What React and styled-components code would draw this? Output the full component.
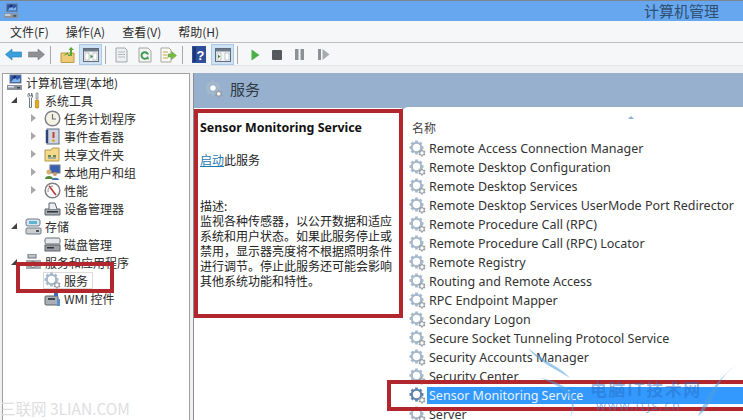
import React from "react";
import styled, { createGlobalStyle } from "styled-components";

const FONT = `"Noto Sans", "Noto Sans CJK SC", sans-serif`;
const CJK = `"Noto Sans CJK SC", "Noto Sans", sans-serif`;

const Global = createGlobalStyle`
  html, body { margin: 0; padding: 0; background: #fff; }
`;

const Page = styled.div`
  position: relative;
  width: 743px;
  height: 420px;
  overflow: hidden;
  display: flex;
  flex-direction: column;
  background: #f0f1f3;
  font-family: ${CJK};
  color: #2b2b2b;
`;

const TitleBar = styled.div`
  height: 20px;
  flex: none;
  display: flex;
  align-items: center;
  justify-content: space-between;
  padding: 0 24px 0 3px;
  background: #66a7f0;
  border-top: 1px solid #7d8590;
`;
const TitleText = styled.span`
  font-size: 15px;
  line-height: 18px;
  color: #2f4f6f;
`;

const MenuBar = styled.div`
  height: 22px;
  flex: none;
  display: flex;
  align-items: center;
  gap: 17px;
  padding-left: 10px;
  background: #f6f7f9;
  border-bottom: 1px solid #bdbfc3;
  box-sizing: border-box;
  font-size: 12px;
`;

const ToolBar = styled.div`
  height: 23px;
  flex: none;
  display: flex;
  align-items: center;
  padding: 1px 0 0 5px;
  box-sizing: border-box;
  background: #f6f7f9;
  border-bottom: 1px solid #e4e5e7;
`;
const ToolSlot = styled.div`
  flex: none;
  width: ${(p) => p.$w}px;
  height: 21px;
  margin-left: ${(p) => p.$gap || 0}px;
  display: flex;
  align-items: center;
  justify-content: center;
  box-sizing: border-box;
  ${(p) => p.$active && "background:#cfe2f5;border:1px solid #a9c9e8;"}
`;
const ToolSep = styled.div`
  flex: none;
  width: 1px;
  height: 18px;
  margin-left: ${(p) => p.$gap || 0}px;
  background: #a6a8ac;
`;

const Body = styled.div`
  flex: 1;
  min-height: 0;
  display: flex;
  padding: 7px 0 0 2px;
  gap: 3px;
`;

const TreePanel = styled.div`
  width: 188px;
  flex: none;
  background: #fff;
  border: 1px solid #a0a0a0;
  border-bottom: none;
  box-sizing: border-box;
`;
const TreeRow = styled.div`
  height: 18px;
  box-sizing: border-box;
  display: flex;
  align-items: center;
  padding: 0 0 2px ${(p) => p.$indent}px;
  font-size: 12px;
  white-space: nowrap;
  color: #2b2b2b;
`;
const Arrow = styled.span`
  width: 0;
  height: 0;
  flex: none;
  margin-right: ${(p) => p.$mr}px;
  ${(p) =>
    p.$open
      ? `border-left:6px solid transparent;border-bottom:6px solid #404040;`
      : `border-top:4px solid transparent;border-bottom:4px solid transparent;border-left:5px solid #a8a8a8;`}
`;
const IconBox = styled.span`
  width: 17px;
  height: 17px;
  flex: none;
  margin-right: 3px;
  display: flex;
  align-items: center;
  justify-content: center;
`;
const SelectedItem = styled.span`
  display: flex;
  align-items: center;
  height: 15px;
  margin-left: -1px;
  padding-right: 4px;
  border: 1px solid #dcdcdc;
`;

const Content = styled.div`
  flex: 1;
  min-width: 0;
  display: flex;
  flex-direction: column;
  border-left: 1px solid #8b8f94;
  background: #96b0ce;
`;
const ContentHeader = styled.div`
  height: 35px;
  flex: none;
  display: flex;
  align-items: center;
  box-sizing: border-box;
  gap: 7px;
  padding: 0 0 4px 11px;
  font-size: 15px;
  color: #2f3a45;
`;
const Split = styled.div`
  flex: 1;
  min-height: 0;
  display: flex;
`;
const Description = styled.div`
  width: 208px;
  flex: none;
  box-sizing: border-box;
  background: #fff;
  padding: 12px 0 0 6px;
  font-size: 12px;
  line-height: 15px;
  color: #222;
`;
const ServiceTitle = styled.div`
  font-family: ${FONT};
  font-weight: 700;
  font-size: 12.4px;
  line-height: 16px;
  color: #111;
`;
const StartLine = styled.div`
  margin-top: 16px;
`;
const StartLink = styled.span`
  color: #1f78b4;
  text-decoration: underline;
`;
const DescBlock = styled.div`
  margin-top: 31px;
  white-space: nowrap;
`;

const ListPanel = styled.div`
  flex: 1;
  min-width: 0;
  background: #fff;
  border-top-left-radius: 6px;
  margin-top: -1px;
  overflow: hidden;
  display: flex;
  flex-direction: column;
`;
const ListHeader = styled.div`
  position: relative;
  height: 32px;
  flex: none;
  display: flex;
  align-items: flex-end;
  padding: 0 0 3px 10px;
  box-sizing: border-box;
  font-size: 12px;
  color: #444;
`;
const SortCaret = styled.span`
  position: absolute;
  left: 226px;
  top: 9px;
  width: 0;
  height: 0;
  border-left: 3px solid transparent;
  border-right: 3px solid transparent;
  border-bottom: 3px solid #8fb2d2;
`;
const ServiceRow = styled.div`
  height: 19px;
  flex: none;
  display: flex;
  align-items: center;
  padding-left: 7px;
  font-family: ${FONT};
  font-size: 12.5px;
  white-space: nowrap;
  color: #333;
`;
const RowName = styled.span`
  flex: 1;
  align-self: stretch;
  display: flex;
  align-items: center;
  padding-left: 2px;
  margin-left: 1px;
  ${(p) => p.$selected && "background:#3399ff;color:#e8f4ff;height:17px;align-self:center;"}
`;
const GearWrap = styled.span`
  width: 17px;
  height: 17px;
  flex: none;
  display: flex;
`;

const RedBox = styled.div`
  position: absolute;
  left: ${(p) => p.$x}px;
  top: ${(p) => p.$y}px;
  width: ${(p) => p.$w}px;
  height: ${(p) => p.$h}px;
  box-sizing: border-box;
  border: 4px solid #b2262d;
  pointer-events: none;
`;
const WatermarkLeft = styled.div`
  position: absolute;
  left: 0;
  top: 398px;
  font-family: ${CJK};
  font-size: 15.5px;
  line-height: 20px;
  color: #dedede;
  white-space: nowrap;
`;
const Swoosh = styled.svg`
  position: absolute;
  left: 520px;
  top: 340px;
`;
const WatermarkBig = styled.div`
  position: absolute;
  left: 590px;
  top: 379px;
  font-size: 17px;
  line-height: 20px;
  font-weight: 700;
  letter-spacing: 1.5px;
  color: rgba(35, 105, 190, 0.45);
  white-space: nowrap;
`;
const WatermarkUrl = styled.div`
  position: absolute;
  left: 596px;
  top: 397px;
  font-family: ${FONT};
  font-size: 13px;
  line-height: 16px;
  letter-spacing: 1.5px;
  color: rgba(50, 120, 200, 0.5);
  white-space: nowrap;
`;

/* ---------- icons ---------- */
const Gear = ({ size = 17, dark }) => {
  const teeth = [0, 45, 90, 135, 180, 225, 270, 315];
  const c = dark ? "#5d83ad" : "#a6b9cb";
  return (
    <svg width={size} height={size} viewBox="0 0 17 17">
      <g transform="translate(7.5 7.5)">
        {teeth.map((a) => (
          <rect key={a} x="-1.4" y="-7" width="2.8" height="3" fill={c} transform={`rotate(${a})`} />
        ))}
        <circle r="4.7" fill="none" stroke={c} strokeWidth="2" />
        <circle r="2.6" fill="#fff" />
      </g>
      <g transform="translate(13 13)">
        {[0, 60, 120, 180, 240, 300].map((a) => (
          <rect key={a} x="-.8" y="-3.6" width="1.6" height="1.6" fill="#9a9fa6" transform={`rotate(${a})`} />
        ))}
        <circle r="2.2" fill="#fff" stroke="#9a9fa6" strokeWidth="1.1" />
      </g>
    </svg>
  );
};

const Computer = ({ size = 17 }) => (
  <svg width={size} height={size} viewBox="0 0 17 17">
    <rect x="4" y="1" width="11" height="8" fill="#2f55a8" stroke="#6b7f99" />
    <path d="M5 8 9 3l2 3 3-2v4z" fill="#7fb4ea" />
    <path d="M7 3c1-2 3-2 3 0s-3 3-3 0z" fill="#1c2f70" />
    <rect x="1" y="11" width="15" height="5" fill="#8b929b" />
    <rect x="2" y="12" width="6" height="1.5" fill="#dfe3e8" />
    <rect x="11" y="13" width="3" height="1.5" fill="#3d434a" />
  </svg>
);
const Tools = () => (
  <svg width="17" height="17" viewBox="0 0 17 17">
    <path d="M4 1C2 3 3 5 4.5 6v9.500h2V6C8 5 8 3 6.500 1v3h-2z" fill="#fff" stroke="#6f7780" />
    <path d="M11 1h2v6h-2z" fill="#d6d9dc" stroke="#7d848c" strokeWidth=".7" />
    <rect x="10.300" y="8" width="3.400" height="8" rx="1" fill="#e3ad1c" stroke="#9b7410" strokeWidth=".6" />
  </svg>
);
const Clock = () => (
  <svg width="17" height="17" viewBox="0 0 17 17">
    <circle cx="8.500" cy="8.500" r="7.300" fill="#f5f3e6" stroke="#7f8389" strokeWidth="1.500" />
    <path d="M8.500 4v5H12" fill="none" stroke="#6d6f73" strokeWidth="1.200" />
  </svg>
);
const LogBook = () => (
  <svg width="17" height="17" viewBox="0 0 17 17">
    <rect x="3" y="1" width="12" height="15" fill="#cfd6e2" stroke="#5f6c85" />
    <path d="M3 2v13" stroke="#2f4478" strokeWidth="2.500" />
    <path d="M9.500 4v6" stroke="#c2452e" strokeWidth="2" />
    <circle cx="9.500" cy="12.500" r="1.500" fill="#e3a92a" />
  </svg>
);
const Folder = () => (
  <svg width="17" height="17" viewBox="0 0 17 17">
    <path d="M1 4h6l1.500-2H15v13H1z" fill="#f3d98a" stroke="#b5984c" />
    <path d="M4 9h3v2H4zm5 0h3v2H9z" fill="#5f8a58" />
    <path d="M4 12h8" stroke="#5d7ea3" />
  </svg>
);
const Users = () => (
  <svg width="17" height="17" viewBox="0 0 17 17">
    <rect x="6" y="1" width="10" height="8" fill="#3a5fb0" stroke="#66788f" />
    <circle cx="5" cy="8" r="2.500" fill="#d7ae6f" />
    <path d="M1 15c0-4 8-4 8 0z" fill="#4f8a3c" />
    <circle cx="11" cy="10" r="2" fill="#c99a60" />
    <path d="M8 16c0-3 7-3 7 0z" fill="#4370b8" />
  </svg>
);
const Perf = () => (
  <svg width="17" height="17" viewBox="0 0 17 17">
    <circle cx="8.500" cy="8.500" r="7.300" fill="#fff" stroke="#7e7f80" strokeWidth="1.500" />
    <path d="m5 4 7 9" stroke="#b8352a" strokeWidth="1.500" />
    <path d="M4 10a5 5 0 0 1 5-6" fill="none" stroke="#8a8a8a" />
  </svg>
);
const Device = () => (
  <svg width="17" height="17" viewBox="0 0 17 17">
    <path d="M1 9h15v6H1z" fill="#a5acb4" stroke="#5d646c" />
    <path d="M5 9V3h6l2 6" fill="#e9edf1" stroke="#5d646c" />
    <rect x="3" y="11" width="11" height="1.500" fill="#2d3339" />
  </svg>
);
const Storage = () => (
  <svg width="17" height="17" viewBox="0 0 17 17">
    <rect x="1" y="1" width="14" height="7" rx="2" fill="#d7e4ee" stroke="#6e7a85" />
    <rect x="4" y="3" width="8" height="3" fill="#5fb4d6" />
    <rect x="1" y="10" width="15" height="6" rx="1" fill="#c9ced3" stroke="#6e7a85" />
    <rect x="11" y="12" width="3" height="2" fill="#555" />
  </svg>
);
const Disk = () => (
  <svg width="17" height="17" viewBox="0 0 17 17">
    <rect x="1" y="2" width="15" height="6" rx="1.500" fill="#e5e8ea" stroke="#666c72" />
    <rect x="1" y="9" width="15" height="6" fill="#9aa0a6" stroke="#5f656b" />
    <rect x="3" y="11" width="7" height="1.500" fill="#333" />
  </svg>
);
const ServicesApp = () => (
  <svg width="17" height="17" viewBox="0 0 17 17">
    <rect x="3" y="0" width="8" height="4" fill="#bfc4c9" stroke="#6b7178" />
    <rect x="1" y="6" width="15" height="9" fill="#a5abb2" />
    <circle cx="8" cy="10.500" r="3" fill="#fff" stroke="#6b7178" />
  </svg>
);
const Wmi = () => (
  <svg width="17" height="17" viewBox="0 0 17 17">
    <rect x="1" y="6" width="13" height="9" rx="1" fill="#a8afb6" stroke="#5b6269" />
    <rect x="4" y="8" width="7" height="2" fill="#3f454c" />
    <path d="M10 1h4v5h-4z" fill="#3c6fb5" />
    <path d="M13 9h3v7h-3z" fill="#5d8fc9" />
  </svg>
);

const Back = () => (
  <svg width="17" height="13" viewBox="0 0 17 13">
    <path d="M0.500 6.500 7 1v3h9.500v5H7v3z" fill="#3aa0dc" stroke="#2a7cb0" strokeWidth=".6" />
  </svg>
);
const Forward = () => (
  <svg width="17" height="13" viewBox="0 0 17 13">
    <path d="M16.500 6.500 10 1v3H.5v5H10v3z" fill="#8e9093" stroke="#77797c" strokeWidth=".6" />
  </svg>
);
const UpFolder = () => (
  <svg width="15" height="16" viewBox="0 0 15 16">
    <path d="M1 6h13v9.500H1z" fill="#eecb74" stroke="#b99a49" />
    <path d="M3 9 8 5V7.500h2V3H8.500L11 0l3 3h-2v6H8V7z" fill="#5fa53a" />
  </svg>
);
const PaneIcon = ({ play }) => (
  <svg width="16" height="14" viewBox="0 0 16 14">
    <rect x=".5" y=".5" width="15" height="13" fill="#f4f6f8" stroke="#5f6b76" />
    <rect x="1" y="1" width="14" height="2.500" fill="#6d7a87" />
    <rect x="2" y="5" width="4" height="7" fill="#fff" stroke="#9aa2a9" strokeWidth=".6" />
    <rect x="10" y="5" width="4" height="7" fill="#fff" stroke="#9aa2a9" strokeWidth=".6" />
    {play ? (
      <path d="M3 6.500 5.500 8.500 3 10.500z" fill="#3f8f3f" />
    ) : (
      <path d="M10 8.500 7.500 6.500v4z" fill="#3f8f3f" />
    )}
  </svg>
);
const Doc = () => (
  <svg width="15" height="16" viewBox="0 0 15 16">
    <path d="M2 1h9l2 2v12H2z" fill="#eef0f2" stroke="#a2a6aa" />
    <path d="M4 5h7M4 7.500h7M4 10h7" stroke="#b5b9bd" />
  </svg>
);
const RefreshDoc = () => (
  <svg width="14" height="16" viewBox="0 0 14 16">
    <path d="M1 1h9l3 3v11H1z" fill="#f3f4f2" stroke="#a3a6a3" />
    <path d="M10 7.500A3.300 3.300 0 1 0 9 11" fill="none" stroke="#3f9a54" strokeWidth="2" />
    <path d="M7.500 11.800 11 12.500 10 9z" fill="#3f9a54" />
  </svg>
);
const Export = () => (
  <svg width="17" height="16" viewBox="0 0 17 16">
    <path d="M1 1h8l2 2v12H1z" fill="#fafaf4" stroke="#a8a8a0" />
    <path d="M3 5h5M3 8h4M3 11h5" stroke="#c9a24a" />
    <path d="M8 7h3.500V4.500L16.500 8.500l-5 4V10H8z" fill="#77bb3f" stroke="#5e9a30" strokeWidth=".5" />
  </svg>
);
const Help = () => (
  <svg width="14" height="17" viewBox="0 0 14 17">
    <rect width="14" height="17" fill="#2f4f9a" />
    <rect x="1" y="1" width="3" height="15" fill="#1f3678" />
    <text x="8.500" y="13.500" textAnchor="middle" fontFamily='"Liberation Sans", sans-serif' fontWeight="700" fontSize="13" fill="#fff">?</text>
  </svg>
);
const Play = () => (
  <svg width="9" height="12" viewBox="0 0 9 12"><path d="M0.500 0.500 8.500 6 0.500 11.500z" fill="#4cb04a" /></svg>
);
const Stop = () => (
  <svg width="10" height="10" viewBox="0 0 10 10"><rect width="10" height="10" rx="1" fill="#55585c" /></svg>
);
const Pause = () => (
  <svg width="9" height="11" viewBox="0 0 9 11">
    <rect width="3.500" height="11" fill="#8d9094" /><rect x="5.500" width="3.500" height="11" fill="#8d9094" />
  </svg>
);
const Resume = () => (
  <svg width="12" height="11" viewBox="0 0 12 11">
    <rect width="3" height="11" fill="#8d9094" /><path d="M4.500 0 11.500 5.500 4.500 11z" fill="#a6a9ad" />
  </svg>
);

const tree = [
  { indent: 3, icon: <Computer />, label: "计算机管理(本地)" },
  { indent: 8, arrow: "open", mr: 8, icon: <Tools />, label: "系统工具" },
  { indent: 28, arrow: "closed", mr: 8, icon: <Clock />, label: "任务计划程序" },
  { indent: 28, arrow: "closed", mr: 8, icon: <LogBook />, label: "事件查看器" },
  { indent: 28, arrow: "closed", mr: 8, icon: <Folder />, label: "共享文件夹" },
  { indent: 28, arrow: "closed", mr: 8, icon: <Users />, label: "本地用户和组" },
  { indent: 28, arrow: "closed", mr: 8, icon: <Perf />, label: "性能" },
  { indent: 41, icon: <Device />, label: "设备管理器" },
  { indent: 8, arrow: "open", mr: 8, icon: <Storage />, label: "存储" },
  { indent: 41, icon: <Disk />, label: "磁盘管理" },
  { indent: 8, arrow: "open", mr: 8, icon: <ServicesApp />, label: "服务和应用程序" },
  { indent: 41, icon: <Gear />, label: "服务", selected: true },
  { indent: 41, icon: <Wmi />, label: "WMI 控件" },
];

const services = [
  "Remote Access Connection Manager",
  "Remote Desktop Configuration",
  "Remote Desktop Services",
  "Remote Desktop Services UserMode Port Redirector",
  "Remote Procedure Call (RPC)",
  "Remote Procedure Call (RPC) Locator",
  "Remote Registry",
  "Routing and Remote Access",
  "RPC Endpoint Mapper",
  "Secondary Logon",
  "Secure Socket Tunneling Protocol Service",
  "Security Accounts Manager",
  "Security Center",
  "Sensor Monitoring Service",
  "Server",
];

const descLines = [
  "描述:",
  "监视各种传感器，以公开数据和适应",
  "系统和用户状态。如果此服务停止或",
  "禁用，显示器亮度将不根据照明条件",
  "进行调节。停止此服务还可能会影响",
  "其他系统功能和特性。",
];

export default function App() {
  return (
    <Page>
      <Global />
      <TitleBar>
        <Computer size={16} />
        <TitleText>计算机管理</TitleText>
      </TitleBar>
      <MenuBar>
        <span>文件(F)</span>
        <span>操作(A)</span>
        <span>查看(V)</span>
        <span>帮助(H)</span>
      </MenuBar>
      <ToolBar>
        <ToolSlot $w={17}><Back /></ToolSlot>
        <ToolSlot $w={17} $gap={6}><Forward /></ToolSlot>
        <ToolSep $gap={5} />
        <ToolSlot $w={15} $gap={9}><UpFolder /></ToolSlot>
        <ToolSlot $w={23} $gap={4} $active><PaneIcon /></ToolSlot>
        <ToolSep $gap={3} />
        <ToolSlot $w={15} $gap={8}><Doc /></ToolSlot>
        <ToolSlot $w={14} $gap={9}><RefreshDoc /></ToolSlot>
        <ToolSlot $w={17} $gap={8}><Export /></ToolSlot>
        <ToolSep $gap={5} />
        <ToolSlot $w={14} $gap={9}><Help /></ToolSlot>
        <ToolSlot $w={23} $gap={5} $active><PaneIcon play /></ToolSlot>
        <ToolSep $gap={3} />
        <ToolSlot $w={9} $gap={13}><Play /></ToolSlot>
        <ToolSlot $w={10} $gap={12}><Stop /></ToolSlot>
        <ToolSlot $w={9} $gap={13}><Pause /></ToolSlot>
        <ToolSlot $w={12} $gap={14}><Resume /></ToolSlot>
      </ToolBar>
      <Body>
        <TreePanel>
          {tree.map((n) => (
            <TreeRow key={n.label} $indent={n.indent}>
              {n.arrow && <Arrow $open={n.arrow === "open"} $mr={n.mr} />}
              {n.selected ? (
                <SelectedItem>
                  <IconBox>{n.icon}</IconBox>
                  {n.label}
                </SelectedItem>
              ) : (
                <>
                  <IconBox>{n.icon}</IconBox>
                  {n.label}
                </>
              )}
            </TreeRow>
          ))}
        </TreePanel>
        <Content>
          <ContentHeader>
            <Gear size={18} />
            服务
          </ContentHeader>
          <Split>
            <Description>
              <ServiceTitle>Sensor Monitoring Service</ServiceTitle>
              <StartLine><StartLink>启动</StartLink>此服务</StartLine>
              <DescBlock>
                {descLines.map((l) => <div key={l}>{l}</div>)}
              </DescBlock>
            </Description>
            <ListPanel>
              <ListHeader>
                名称
                <SortCaret />
              </ListHeader>
              {services.map((s) => (
                <ServiceRow key={s}>
                  <GearWrap><Gear dark={s.startsWith("Sensor")} /></GearWrap>
                  <RowName $selected={s.startsWith("Sensor")}>{s}</RowName>
                </ServiceRow>
              ))}
            </ListPanel>
          </Split>
        </Content>
      </Body>

      <RedBox $x={194} $y={109} $w={209} $h={209} />
      <RedBox $x={16} $y={262} $w={98} $h={31} />
      <RedBox $x={387} $y={380} $w={370} $h={31} />

      <WatermarkLeft>三联网 3LIAN.COM</WatermarkLeft>
      <Swoosh width="223" height="80" viewBox="0 0 223 80">
        <path d="M8 8C25 22 42 28 50 38 30 26 16 20 8 8z" fill="#4f9fe0" opacity=".55" />
        <path d="M20 38C45 42 62 55 50 78 58 58 42 46 20 38z" fill="#4f9fe0" opacity=".5" />
        <path d="M217 24C205 34 198 42 196 52 190 62 186 70 178 76 186 60 190 46 217 24z" fill="#4f9fe0" opacity=".55" />
      </Swoosh>
      <WatermarkBig>电脑IT技术网</WatermarkBig>
      <WatermarkUrl>www.itjs.cn</WatermarkUrl>
    </Page>
  );
}
